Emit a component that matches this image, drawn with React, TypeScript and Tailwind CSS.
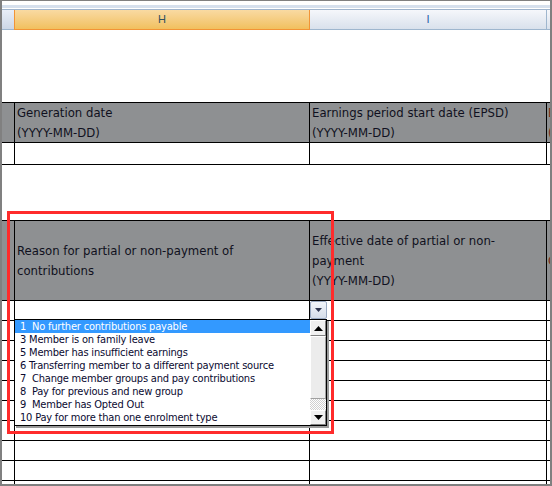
import React from "react"

const tahoma = "font-['DejaVu_Sans_Condensed','DejaVu_Sans',sans-serif]"

const items = [
    "1  No further contributions payable",
    "3 Member is on family leave",
    "5 Member has insufficient earnings",
    "6 Transferring member to a different payment source",
    "7  Change member groups and pay contributions",
    "8  Pay for previous and new group",
    "9  Member has Opted Out",
    "10 Pay for more than one enrolment type",
]

function GridRow({ h, className = "" }: { h: string; className?: string }) {
    return (
        <div className={`flex border-b border-black ${h} ${className}`}>
            <div className="w-[12px]" />
            <div className="w-[295px] border-l border-black" />
            <div className="w-[237px] border-l border-black" />
            <div className="flex-1 border-l border-black" />
        </div>
    )
}

function ScrollButton({ up }: { up?: boolean }) {
    return (
        <div className="flex items-center justify-center bg-[#f0f0f0] border border-t-white border-l-white border-r-[#808080] border-b-[#808080] h-full">
            <svg width="9" height="5" viewBox="0 0 9 5">
                {up ? <polygon points="0,5 9,5 4.5,0" fill="#000" /> : <polygon points="0,0 9,0 4.5,5" fill="#000" />}
            </svg>
        </div>
    )
}

export default function App() {
    return (
        <div className={`relative w-[552px] h-[486px] overflow-hidden bg-white border-t border-l-2 border-r-2 border-b-2 border-[#808080] ${tahoma}`}>
            {/* top strip */}
            <div className="h-[4px] bg-white" />
            <div className="h-[3px] bg-[#d6e0ed]" />
            <div className="h-[1px] bg-white" />

            {/* column headers */}
            <div className="flex h-[21px] border-t border-[#9fb4cd] font-['Liberation_Sans',sans-serif] text-[11px]">
                <div className="w-[12px] bg-gradient-to-b from-[#e8eef8] to-[#cdd7e6] border-b border-[#9eb6ce]" />
                <div className="w-[296px] flex items-center justify-center bg-gradient-to-b from-[#f9daa2] to-[#f1c05d] border-x border-b border-[#f29436] text-[#2f5060]">
                    H
                </div>
                <div className="w-[237px] flex items-center justify-center bg-gradient-to-b from-[#f5f7fb] to-[#d9e1ec] border-r border-b border-[#9eb6ce] text-[#1f5fa8]">
                    I
                </div>
                <div className="flex-1 bg-gradient-to-b from-[#f5f7fb] to-[#d9e1ec] border-b border-[#9eb6ce]" />
            </div>

            <div className="h-[72px]" />

            {/* first header block */}
            <div className="border-t border-black">
                <div className="flex h-[40px] border-b border-black bg-[#8e9092] text-[13px] leading-[20px] text-[#101020]">
                    <div className="w-[12px]" />
                    <div className="w-[295px] border-l border-black pl-[2px] whitespace-nowrap overflow-hidden">
                        Generation date
                        <br />
                        (YYYY-MM-DD)
                    </div>
                    <div className="w-[237px] border-l border-black pl-[2px] whitespace-nowrap overflow-hidden">
                        Earnings period start date (EPSD)
                        <br />
                        (YYYY-MM-DD)
                    </div>
                    <div className="flex-1 border-l border-black pl-[1px] whitespace-nowrap overflow-hidden text-[#7a2a16]">
                        Earnings period end date
                        <br />
                        (YYYY-MM-DD)
                    </div>
                </div>
                <GridRow h="h-[22px]" />
            </div>

            <div className="h-[55px]" />

            {/* second header block */}
            <div className="border-t border-black">
                <div className="flex h-[80px] border-b border-black bg-[#8e9092] text-[13px] leading-[20px] text-[#101020]">
                    <div className="w-[12px]" />
                    <div className="w-[295px] border-l border-black pl-[2px] whitespace-nowrap overflow-hidden flex flex-col justify-center">
                        <span>Reason for partial or non-payment of</span>
                        <span>contributions</span>
                    </div>
                    <div className="w-[237px] border-l border-black pl-[2px] whitespace-nowrap overflow-hidden flex flex-col justify-center">
                        <span>Effective date of partial or non-</span>
                        <span>payment</span>
                        <span>(YYYY-MM-DD)</span>
                    </div>
                    <div className="flex-1 border-l border-black pl-[1px] whitespace-nowrap overflow-hidden flex flex-col justify-center text-[#7a2a16]">
                        <span>Comments</span>
                    </div>
                </div>
                {Array.from({ length: 10 }).map((_, i) => (
                    <GridRow key={i} h="h-[20px]" />
                ))}
            </div>

            {/* combo box input */}
            <div className="absolute left-[12px] top-[299px] w-[296px] h-[20px] bg-white border border-black" />
            <div className="absolute left-[308px] top-[300px] w-[17px] h-[18px] flex items-center justify-center rounded-[2px] border border-[#9aaac2] bg-gradient-to-b from-[#f2f5fa] to-[#d5dde9]">
                <svg width="7" height="4" viewBox="0 0 7 4">
                    <polygon points="0,0 7,0 3.5,4" fill="#2e3550" />
                </svg>
            </div>

            {/* dropdown list */}
            <div className="absolute left-[12px] top-[318px] w-[313px] h-[107px] bg-white border border-black shadow-[2px_2px_0_#9a9a9a] flex text-[11px] leading-[14px] tracking-[-0.2px] text-[#0a0a30]">
                <div className="flex-1 flex flex-col">
                    {items.map((t, i) => (
                        <div
                            key={t}
                            className={`h-[13px] pl-[5px] whitespace-pre overflow-hidden ${i === 0 ? "bg-[#3399ff] text-white" : ""}`}
                        >
                            {t}
                        </div>
                    ))}
                </div>
                <div className="w-[16px] flex flex-col">
                    <div className="h-[16px]">
                        <ScrollButton up />
                    </div>
                    <div className="h-[63px] bg-[#ececec] border border-t-white border-l-white border-r-[#a0a0a0] border-b-[#a0a0a0]" />
                    <div className="h-[11px] bg-[repeating-conic-gradient(#d0d0d0_0%_25%,#ffffff_0%_50%)] bg-[length:2px_2px]" />
                    <div className="flex-1">
                        <ScrollButton />
                    </div>
                </div>
            </div>

            {/* highlight box */}
            <div className="absolute left-[5px] top-[210px] w-[327px] h-[223px] border-[3px] border-[#ff2b2b]" />
        </div>
    )
}
